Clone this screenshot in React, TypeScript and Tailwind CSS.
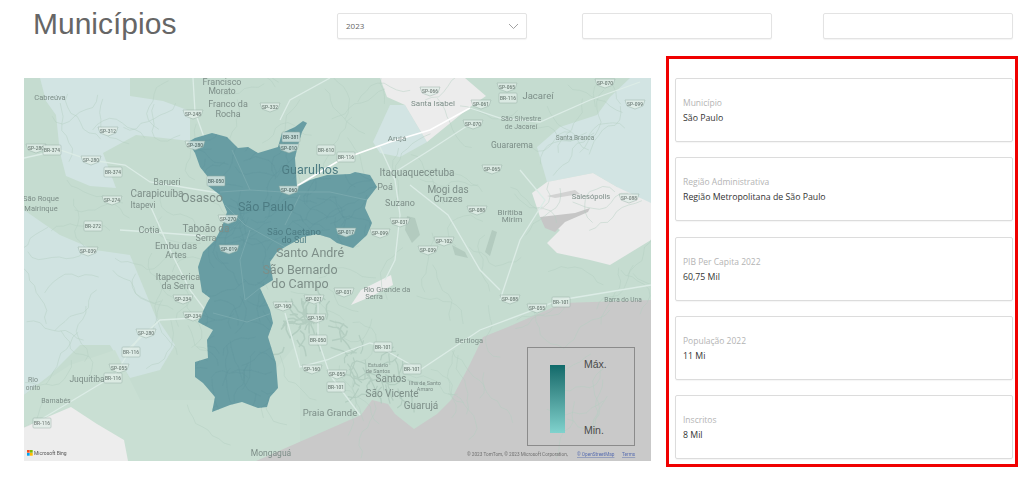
import React from "react";

type L = [string, number, number, number];
const labels: L[] = [
  ["Francisco", 222, 85, 9], ["Morato", 222, 94, 8.5], ["Franco da", 228, 107, 9], ["Rocha", 228, 117, 9],
  ["Cabreúva", 50, 100, 7.5], ["Santa Isabel", 433, 106, 8], ["Jacareí", 538, 99, 9.5], ["São Silvestre", 521, 121, 7],
  ["de Jacareí", 521, 129, 7], ["Santa Branca", 575, 140, 6.5], ["Guararema", 512, 148, 8.5], ["Arujá", 397, 141, 8],
  ["Itaquaquecetuba", 417, 176, 10], ["Poá", 385, 190, 9], ["Mogi das", 448, 193, 10], ["Cruzes", 448, 202, 9.5],
  ["Suzano", 400, 206, 9], ["Biritiba", 510, 215, 8], ["Mirim", 512, 222, 8], ["Salesópolis", 591, 199, 7.5],
  ["Barueri", 167, 185, 8.5], ["Carapicuíba", 157, 197, 10], ["Osasco", 202, 202, 12.5],
  ["Itapevi", 143, 208, 8.5], ["São Roque", 41, 201, 7.5], ["Mairinque", 41, 211, 7.5], ["Cotia", 149, 233, 9],
  ["Taboão da", 206, 232, 10], ["Serra", 206, 241, 9], ["Embu das", 176, 249, 9.5], ["Artes", 176, 258, 9],
  ["Itapecerica", 178, 280, 9], ["da Serra", 178, 289, 9], ["Santo André", 310, 257, 12.5], ["São Bernardo", 300, 274, 12.5],
  ["do Campo", 300, 288, 12.5], ["Rio Grande da", 387, 292, 7.5], ["Serra", 374, 299, 7.5], ["Juquitiba", 87, 382, 8.5],
  ["Barnabés", 56, 403, 7], ["Praia Grande", 330, 416, 9.5], ["Mongaguá", 271, 456, 8.5], ["Santos", 391, 382, 10],
  ["São Vicente", 392, 397, 10], ["Guarujá", 421, 409, 10], ["Estuário", 378, 367, 5.5], ["de Santos", 378, 373, 5.5],
  ["Ilha de Santo", 425, 385, 5.5], ["Amaro", 425, 391, 5.5], ["Bertioga", 469, 343, 7.5], ["Barra do Una", 623, 302, 6.5],
  ["Rio", 33, 382, 7], ["onito", 33, 390, 6.5],
];
const darkLabels: L[] = [
  ["São Paulo", 266, 211, 12.5],
  ["Guarulhos", 310, 174, 12.5],
  ["São Caetano", 294, 235, 9.5],
  ["do Sul", 294, 243, 9],
];
const shields: [string, number, number][] = [
  ["SP-248", 193, 114], ["SP-332", 270, 107], ["BR-381", 291, 137], ["SP-010", 289, 148], ["BR-610", 326, 150],
  ["BR-116", 346, 157], ["SP-280", 36, 148], ["BR-374", 52, 150], ["SP-280", 91, 160], ["BR-374", 113, 172],
  ["SP-312", 108, 131], ["SP-274", 112, 200], ["BR-272", 93, 226], ["SP-280", 195, 145], ["BR-050", 216, 181],
  ["SP-060", 289, 190], ["SP-270", 228, 219], ["SP-017", 346, 232], ["SP-066", 430, 91], ["SP-065", 507, 87],
  ["BR-116", 508, 98], ["SP-061", 481, 104], ["SP-070", 473, 124], ["SP-065", 492, 169], ["SP-088", 477, 210],
  ["SP-031", 400, 222], ["SP-099", 380, 233], ["SP-102", 444, 241], ["SP-039", 428, 250], ["SP-088", 629, 198],
  ["SP-099", 635, 104], ["SP-070", 605, 83], ["SP-039", 88, 251], ["SP-019", 229, 249], ["SP-234", 183, 299],
  ["SP-234", 193, 316], ["SP-280", 146, 333], ["BR-116", 131, 352], ["SP-055", 119, 368], ["BR-116", 113, 378],
  ["BR-116", 42, 423], ["SP-160", 283, 306], ["SP-021", 314, 299], ["SP-150", 316, 318], ["SP-031", 344, 292],
  ["BR-050", 318, 340], ["SP-160", 312, 369], ["SP-055", 337, 374], ["BR-101", 336, 387], ["BR-101", 383, 347],
  ["BR-101", 412, 369], ["SP-088", 510, 299], ["SP-055", 537, 308], ["BR-101", 561, 302],
];

const saoPaulo =
  "M303,121 307,123 302,132 298,145 295,158 297,187 310,180 327,175 350,174 355,172 370,175 377,187 367,200 365,208 372,223 367,235 353,248 337,243 330,238 317,234 303,237 285,247 277,252 270,262 273,280 260,288 270,310 273,323 268,337 276,363 278,388 270,397 267,407 258,408 242,402 230,405 212,412 215,397 203,383 195,377 195,362 208,358 207,340 213,330 198,322 207,303 210,298 202,292 198,267 203,252 215,240 222,227 227,212 220,195 207,185 208,177 200,167 195,153 188,142 195,138 212,133 227,137 238,148 248,147 258,153 278,147 282,133 295,127Z";

function wander(seed: number, count: number, x0: number, y0: number, w: number, h: number, len: number, step = 7) {
  let s = seed;
  const r = () => ((s = (s * 16807) % 2147483647) / 2147483647);
  const out: string[] = [];
  for (let i = 0; i < count; i++) {
    let x = x0 + r() * w;
    let y = y0 + r() * h;
    let a = r() * Math.PI * 2;
    let d = `M${x.toFixed(1)},${y.toFixed(1)}`;
    for (let k = 0; k < len; k++) {
      a += (r() - 0.5) * 1.5;
      x += Math.cos(a) * step;
      y += Math.sin(a) * step;
      d += ` L${x.toFixed(1)},${y.toFixed(1)}`;
    }
    out.push(d);
  }
  return out.join(" ");
}
const thinA = wander(12345, 130, 24, 78, 627, 340, 9);
const thinB = wander(777, 170, 185, 122, 195, 290, 6);
const urbanA = wander(4242, 34, 282, 296, 62, 52, 4, 5);
const urbanB = wander(991, 34, 350, 352, 60, 45, 4, 5);

const roads = [
  "M24,158 L60,150 L90,160 L125,165 L150,182 L170,185 L200,190 L220,193",
  "M193,78 L195,112 L205,140",
  "M280,120 L290,100 L330,78",
  "M380,147 L395,180 L400,215 L395,260 L385,280",
  "M470,108 L500,118 L540,122 L590,100 L640,82",
  "M470,124 L430,150 L395,172",
  "M410,185 L448,215 L480,270 L500,290",
  "M150,205 L170,250 L190,290 L205,310",
  "M120,230 L150,232 L205,236",
  "M285,313 L300,367 L327,360 L345,352 L370,343 L385,347",
  "M318,300 L318,340 L330,375 L360,415",
  "M385,350 L420,370 L480,330 L560,300 L651,285",
  "M125,352 L160,320 L195,318",
  "M40,420 L115,375 L130,350 L145,330",
  "M500,300 L520,240 L545,200 L520,170",
];
const inner = [
  "M220,192 L250,190 L283,192 L330,192 L367,200",
  "M225,205 L245,225 L285,247",
  "M250,230 L240,260 L245,300 L260,288",
  "M300,195 L285,225",
  "M213,313 L247,322 L272,313",
  "M232,150 L250,190",
];

const cards = [
  ["Município", "São Paulo"],
  ["Região Administrativa", "Região Metropolitana de São Paulo"],
  ["PIB Per Capita 2022", "60,75 Mil"],
  ["População 2022", "11 Mi"],
  ["Inscritos", "8 Mil"],
];

function Shield({ t, x, y }: { t: string; x: number; y: number }) {
  const br = t.startsWith("BR");
  return (
    <g opacity={0.75}>
      {br ? (
        <rect x={x - 9} y={y - 5} width={18} height={10} rx={1} fill="#e2eee8" stroke="#93aca2" strokeWidth={0.6} />
      ) : (
        <path
          d={`M${x - 10},${y - 4} L${x + 10},${y - 4} L${x + 8},${y + 2} L${x},${y + 5} L${x - 8},${y + 2}Z`}
          fill="#e2eee8"
          stroke="#93aca2"
          strokeWidth={0.6}
        />
      )}
      <text x={x} y={y + 1.7} textAnchor="middle" fontSize={4.8} fill="#4c5a55" fontFamily="Roboto, sans-serif" fontWeight={500}>
        {t}
      </text>
    </g>
  );
}

function MapArt() {
  return (
    <svg viewBox="24 78 627 383" className="block w-full h-full blur-[0.5px]">
      <defs>
        <clipPath id="sp">
          <path d={saoPaulo} />
        </clipPath>
      </defs>
      <rect x="24" y="78" width="627" height="383" fill="#c5dcd0" />
      <path d="M40,78 L130,78 L130,96 L163,101 L190,111 L190,141 L136,135 L103,153 L116,188 L90,186 L66,176 L60,153 L56,115 L46,101Z" fill="#d2e4e3" />
      <path d="M24,210 L60,235 L95,250 L130,255 L155,315 L175,345 L160,370 L130,378 L110,345 L80,345 L50,375 L24,395Z" fill="#d0e3e1" />
      <path d="M24,395 L70,365 L115,350 L140,400 L250,400 L300,340 L300,461 L24,461Z" fill="#c9dfd3" />
      <path d="M373,142 L390,105 L405,105 L427,142 L400,157 L380,153Z" fill="#d2e4e3" />
      <path d="M537,147 L560,127 L597,115 L610,97 L630,78 L651,78 L651,240 L617,187 L593,173 L547,182Z" fill="#d2e4e3" />
      <path d="M380,78 L465,78 L486,96 L470,107 L427,142 L405,105 L387,97Z" fill="#ececec" />
      <path d="M532,193 L547,182 L593,173 L617,187 L651,203 L651,240 L610,265 L590,260 L557,253 L547,243 L560,230 L540,217Z" fill="#ececec" />
      <path d="M351,305 L361,290 L391,275 L393,285 L370,297Z" fill="#ececec" />
      <path d="M24,427 L71,407 L97,424 L124,440 L128,461 L24,461Z" fill="#ededed" />
      <path d="M540,217 L575,213 L590,208 L588,212 L565,222 L555,232 L545,228Z" fill="#c6c6c6" />
      <path d="M547,196 L575,190 L580,194 L555,198Z" fill="#d2d2d2" />
      <path d="M407,216 L415,218 L420,235 L412,243 L405,230Z M452,245 L465,252 L468,258 L455,255Z M492,230 L497,232 L490,256 L485,252Z" fill="#b3cbbf" />
      <path d="M256,461 L361,415 L372,400 L388,404 L395,414 L414,429 L437,414 L451,400 L470,364 L483,337 L508,327 L563,303 L651,300 L651,461Z" fill="#c9c9c9" />
      <path d={thinA} fill="none" stroke="#b3cdc1" strokeWidth={0.45} />
      <path d={urbanA} fill="none" stroke="#b3cdc0" strokeWidth={1.5} />
      <path d={urbanB} fill="none" stroke="#b3cdc0" strokeWidth={1.2} />
      {roads.map((d) => (
        <path key={d} d={d} fill="none" stroke="#dcece6" strokeWidth={1.3} />
      ))}
      <path d="M297,186 L320,172 L340,160 L390,142 L430,130 L470,108" fill="none" stroke="#ffffff" strokeWidth={1.5} />
      <path d={saoPaulo} fill="#689da3" />
      <g clipPath="url(#sp)">
        <path d={thinB} fill="none" stroke="#61969d" strokeWidth={0.4} />
        {inner.map((d) => (
          <path key={d} d={d} fill="none" stroke="#78a8ad" strokeWidth={1} />
        ))}
      </g>
      {labels.map(([t, x, y, s]) => (
        <text key={t + x} x={x} y={y} textAnchor="middle" fontSize={s} fill="#7d8e88" fontFamily="Roboto, sans-serif">
          {t}
        </text>
      ))}
      {darkLabels.map(([t, x, y, s]) => (
        <text key={t} x={x} y={y} textAnchor="middle" fontSize={s} fill="#4d7c83" fontFamily="Roboto, sans-serif">
          {t}
        </text>
      ))}
      {shields.map(([t, x, y]) => (
        <Shield key={t + x} t={t} x={x} y={y} />
      ))}
      <rect x="27" y="450" width="2.7" height="2.7" fill="#f25022" />
      <rect x="30" y="450" width="2.7" height="2.7" fill="#7fba00" />
      <rect x="27" y="453" width="2.7" height="2.7" fill="#00a4ef" />
      <rect x="30" y="453" width="2.7" height="2.7" fill="#ffb900" />
      <text x="34" y="455" fontSize={5} fill="#555" fontFamily="Roboto, sans-serif">Microsoft Bing</text>
      <text x="467" y="456" fontSize={4.7} fill="#6f6f6f" fontFamily="Roboto, sans-serif">
        © 2023 TomTom, © 2023 Microsoft Corporation,
      </text>
      <text x="577" y="456" fontSize={4.7} fill="#5a6fb0" textDecoration="underline" fontFamily="Roboto, sans-serif">
        © OpenStreetMap
      </text>
      <text x="622" y="456" fontSize={4.7} fill="#5a6fb0" textDecoration="underline" fontFamily="Roboto, sans-serif">
        Terms
      </text>
    </svg>
  );
}

function Box({ children, className = "" }: { children?: React.ReactNode; className?: string }) {
  return (
    <div className={`h-[26px] w-[190px] rounded-[2px] border border-[#e3e3e3] bg-white shadow-[0_1px_1px_rgba(0,0,0,0.05)] ${className}`}>
      {children}
    </div>
  );
}

export default function App() {
  return (
    <div className="w-[1024px] h-[482px] overflow-hidden bg-white font-['Open_Sans',sans-serif]">
      <header className="flex items-start pt-[13px] h-[40px]">
        <h1 className="ml-[33px] w-[304px] -mt-[7px] text-[30px] leading-[36px] text-[#666666] font-['Liberation_Sans',sans-serif]">
          Municípios
        </h1>
        <Box className="flex items-center justify-between pl-[8px] pr-[7px]">
          <span className="text-[8px] text-[#666]">2023</span>
          <svg width="11" height="7" viewBox="0 0 11 7" fill="none" stroke="#8a8a8a" strokeWidth="0.8">
            <path d="M1 1 L5.5 5.5 L10 1" />
          </svg>
        </Box>
        <Box className="ml-[55px]" />
        <Box className="ml-[51px]" />
      </header>
      <main className="flex items-start pl-[24px]">
        <div className="relative mt-[38px] w-[627px] h-[383px]">
          <MapArt />
          <div className="absolute left-[503px] top-[269px] w-[108px] h-[99px] border-[1.5px] border-[#8b8b8b] flex">
            <div className="ml-[22px] mt-[17px] w-[15px] h-[68px] bg-gradient-to-b from-[#0f6a6a] to-[#80d2cd]" />
            <div className="ml-[19px] flex flex-col justify-between pt-[10px] pb-[9px] text-[10.5px] leading-[12px] text-[#4a4a4a] font-['Liberation_Sans',sans-serif]">
              <span>Máx.</span>
              <span>Min.</span>
            </div>
          </div>
        </div>
        <section className="ml-[15px] mt-[16px] w-[352px] h-[411px] border-[3px] border-[#f00000] pt-[19px] pb-[5px] pl-[6px] pr-[2px] flex flex-col justify-between">
          {cards.map(([a, b]) => (
            <div
              key={a}
              className="h-[64px] rounded-[2px] border border-[#dcdcdc] pl-[7px] pt-[16px] flex flex-col shadow-[0_1px_1px_rgba(0,0,0,0.04)]"
            >
              <div className="text-[8.5px] leading-[15px] text-[#b4b4b4]">{a}</div>
              <div className="mt-[1px] text-[8.75px] leading-[15px] text-[#333]">{b}</div>
            </div>
          ))}
        </section>
      </main>
    </div>
  );
}
